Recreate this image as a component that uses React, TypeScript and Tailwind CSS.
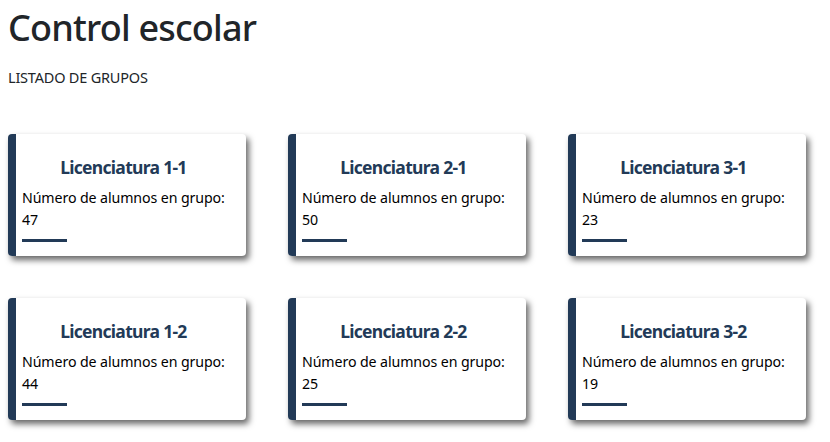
import React from "react";

const groups = [
  { name: "Licenciatura 1-1", n: 47 },
  { name: "Licenciatura 2-1", n: 50 },
  { name: "Licenciatura 3-1", n: 23 },
  { name: "Licenciatura 1-2", n: 44 },
  { name: "Licenciatura 2-2", n: 25 },
  { name: "Licenciatura 3-2", n: 19 },
];

export default function App() {
  return (
    <div
      className="min-h-[442px] bg-white px-2 text-[#212529]"
      style={{ fontFamily: '"Noto Sans", "Open Sans", sans-serif' }}
    >
      <h1 className="pt-[6px] text-[36px] leading-[44px] font-medium tracking-[-0.8px]">Control escolar</h1>
      <p className="mt-[17px] text-[14.5px] leading-[20px] tracking-[-0.2px]">LISTADO DE GRUPOS</p>
      <div className="mt-[47px] grid grid-cols-[238px_238px_238px] gap-x-[42px] gap-y-[42px]">
        {groups.map((g) => (
          <div
            key={g.name}
            className="flex h-[122px] rounded-[4px] bg-white shadow-[3px_4px_6px_rgba(0,0,0,0.6)] overflow-hidden"
          >
            <div className="w-[8px] shrink-0 bg-[#223a57]" />
            <div className="flex-1 pl-[6px] pr-[34px] pt-[21px]">
              <h5 className="text-center text-[17.5px] leading-[24px] font-bold text-[#223a57] tracking-[-0.7px] whitespace-nowrap">
                {g.name}
              </h5>
              <p className="mt-[9px] text-[14.2px] leading-[20px] text-black tracking-[-0.1px] whitespace-nowrap">
                Número de alumnos en grupo:
              </p>
              <p className="mt-[2px] text-[14.2px] leading-[20px] text-black">{g.n}</p>
              <div className="mt-[9px] h-[3px] w-[45px] bg-[#223a57]" />
            </div>
          </div>
        ))}
      </div>
    </div>
  );
}
